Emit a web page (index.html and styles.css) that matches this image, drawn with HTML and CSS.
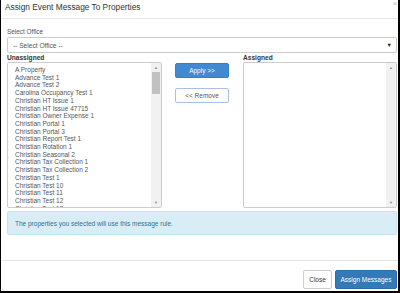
FILE: index.html
```html
<!DOCTYPE html>
<html lang="en">
<head>
  <meta charset="UTF-8" />
  <title>Assign Event Message To Properties</title>
  <link rel="stylesheet" href="styles.css">
</head>
<body>
  <div class="modal">
    <div class="modal-header">
      <h4 class="modal-title">Assign Event Message To Properties</h4>
      <span class="modal-close">×</span>
    </div>

    <div class="modal-body">
      <label class="field-label">Select Office</label>
      <div class="select-box">
        <span>-- Select Office --</span>
        <span class="caret">▼</span>
      </div>

      <div class="picker">
        <div class="picker-col">
          <div class="col-title">Unassigned</div>
          <div class="list-box">
            <ul class="list-items" id="unassigned"></ul>
            <div class="fake-scroll">
              <span class="arrow">▲</span>
              <div class="track"><div class="thumb"></div></div>
              <span class="arrow">▼</span>
            </div>
          </div>
        </div>

        <div class="picker-actions">
          <button class="btn btn-primary btn-apply">Apply &gt;&gt;</button>
          <button class="btn btn-default btn-remove">&lt;&lt; Remove</button>
        </div>

        <div class="picker-col">
          <div class="col-title">Assigned</div>
          <div class="list-box">
            <ul class="list-items"></ul>
            <div class="fake-scroll">
              <span class="arrow">▲</span>
              <div class="track"></div>
              <span class="arrow">▼</span>
            </div>
          </div>
        </div>
      </div>

      <div class="alert-info">The properties you selected will use this message rule.</div>
    </div>

    <div class="modal-footer">
      <button class="btn btn-default">Close</button>
      <button class="btn btn-primary">Assign Messages</button>
    </div>
  </div>

  <script>
    const props = [
      "A Property", "Advance Test 1", "Advance Test 2", "Carolina Occupancy Test 1",
      "Christian HT Issue 1", "Christian HT Issue 47715", "Christian Owner Expense 1",
      "Christian Portal 1", "Christian Portal 3", "Christian Report Test 1",
      "Christian Rotation 1", "Christian Seasonal 2", "Christian Tax Collection 1",
      "Christian Tax Collection 2", "Christian Test 1", "Christian Test 10",
      "Christian Test 11", "Christian Test 12", "Christian Test 13"
    ];
    const list = document.getElementById('unassigned');
    props.forEach(p => {
      const li = document.createElement('li');
      li.textContent = p;
      list.appendChild(li);
    });
  </script>
</body>
</html>
```

FILE: styles.css
```css
html, body {
  margin: 0;
  padding: 0;
  background: #fff;
  font-family: 'Liberation Sans', Arial, sans-serif;
  color: #333;
}

.modal {
  width: 400px;
  height: 293px;
  box-sizing: border-box;
  border-left: 1px solid #000;
  border-right: 2px solid #000;
  border-bottom: 2px solid #000;
  display: flex;
  flex-direction: column;
  overflow: hidden;
}

.modal-header {
  height: 19px;
  box-sizing: border-box;
  border-bottom: 1px solid #e5e5e5;
  display: flex;
  justify-content: space-between;
  padding: 0 0 0 4px;
}

.modal-title {
  margin: 0;
  font-size: 8.3px;
  font-weight: normal;
  line-height: 15px;
  color: #333;
}

.modal-close {
  font-size: 7px;
  line-height: 8px;
  color: #bbb;
  padding-right: 1px;
}

.modal-body {
  flex: 1;
  padding: 8px 1px 0 6px;
  display: flex;
  flex-direction: column;
}

.field-label {
  font-size: 6.4px;
  line-height: 10px;
  color: #555;
}

.select-box {
  height: 16px;
  box-sizing: border-box;
  border: 1px solid #ccc;
  border-radius: 2px;
  display: flex;
  justify-content: space-between;
  align-items: center;
  padding: 0 4px 0 5px;
  font-size: 6.6px;
  color: #555;
}

.caret {
  font-size: 5.5px;
  color: #222;
}

.picker {
  display: grid;
  grid-template-columns: 155px 81px 1fr;
}

.col-title {
  font-size: 6.6px;
  font-weight: bold;
  line-height: 9px;
  color: #333;
}

.list-box {
  height: 146px;
  box-sizing: border-box;
  border: 1px solid #ccc;
  border-radius: 2px;
  display: flex;
  overflow: hidden;
}

.list-items {
  flex: 1;
  margin: 0;
  padding: 3px 0 0 7px;
  list-style: none;
  overflow: hidden;
  font-size: 6.5px;
  line-height: 7.7px;
  color: #555;
}

.fake-scroll {
  width: 10px;
  background: #f1f1f1;
  display: flex;
  flex-direction: column;
  align-items: center;
}

.fake-scroll .arrow {
  font-size: 4px;
  line-height: 9px;
  color: #888;
}

.track {
  flex: 1;
  width: 8px;
}

.thumb {
  height: 22px;
  background: #c1c1c1;
}

.picker-actions {
  display: flex;
  flex-direction: column;
  align-items: flex-start;
  gap: 10px;
  padding: 10px 0 0 13px;
}

.btn {
  font-family: 'Liberation Sans', Arial, sans-serif;
  font-size: 6.5px;
  border-radius: 2px;
  border: 1px solid #ccc;
  background: #fff;
  color: #333;
  padding: 0;
  height: 19px;
}

.btn-primary {
  background: #337ab7;
  border-color: #2e6da4;
  color: #fff;
}

.btn-apply {
  width: 54px;
  height: 15px;
  background: #3f8ad2;
  border-color: #3a7fc0;
}

.btn-remove {
  width: 54px;
  height: 15px;
  border-color: #a9bfe4;
  color: #555;
}

.alert-info {
  margin-top: 3px;
  height: 24px;
  box-sizing: border-box;
  background: #d9edf7;
  border: 1px solid #bce8f1;
  border-radius: 2px;
  color: #31708f;
  font-size: 6.5px;
  display: flex;
  align-items: center;
  padding-left: 7px;
}

.modal-footer {
  border-top: 1px solid #e5e5e5;
  display: flex;
  justify-content: flex-end;
  gap: 3px;
  padding: 9px 1px 2px 0;
}

.modal-footer .btn-default {
  width: 29px;
}

.modal-footer .btn-primary {
  width: 62px;
}
```
